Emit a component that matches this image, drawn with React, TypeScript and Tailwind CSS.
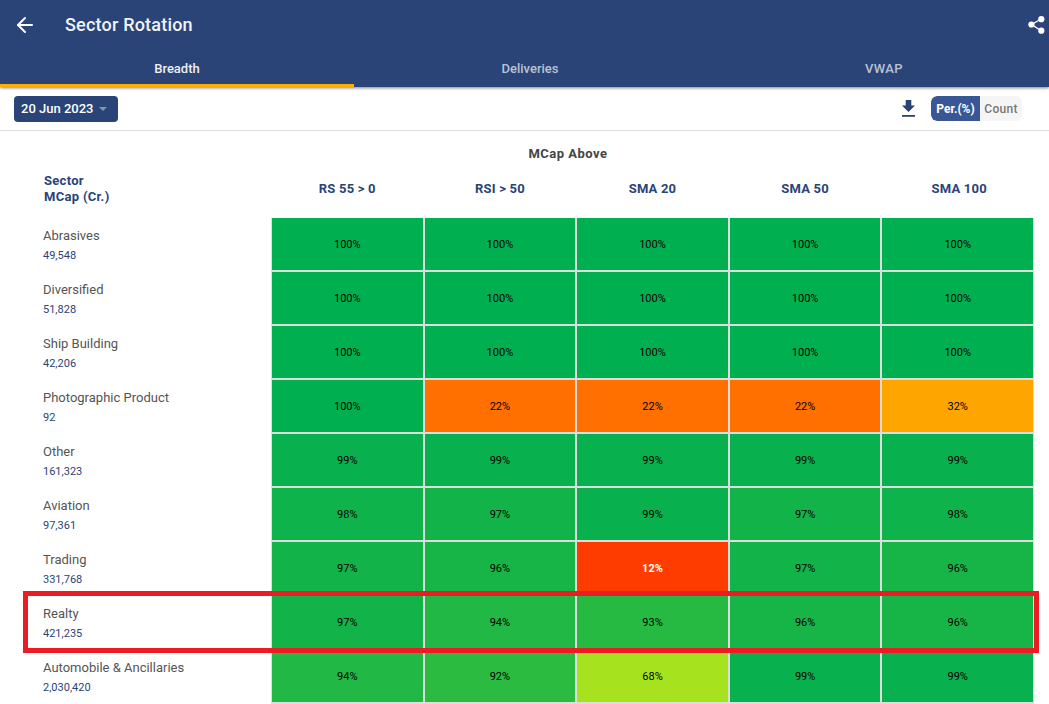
import { ArrowLeft } from "lucide-react";

const columns = ["RS 55 > 0", "RSI > 50", "SMA 20", "SMA 50", "SMA 100"];

const colors: Record<number, string> = {
  100: "bg-[#00b050]",
  99: "bg-[#08b14d]",
  98: "bg-[#0fb34b]",
  97: "bg-[#12b449]",
  96: "bg-[#17b548]",
  94: "bg-[#21b845]",
  93: "bg-[#27ba42]",
  92: "bg-[#2bbb40]",
  68: "bg-[#a6e31e]",
  32: "bg-[#ffa500]",
  22: "bg-[#ff7000]",
  12: "bg-[#ff3c00]",
};

const rows = [
  { name: "Abrasives", mcap: "49,548", values: [100, 100, 100, 100, 100] },
  { name: "Diversified", mcap: "51,828", values: [100, 100, 100, 100, 100] },
  { name: "Ship Building", mcap: "42,206", values: [100, 100, 100, 100, 100] },
  { name: "Photographic Product", mcap: "92", values: [100, 22, 22, 22, 32] },
  { name: "Other", mcap: "161,323", values: [99, 99, 99, 99, 99] },
  { name: "Aviation", mcap: "97,361", values: [98, 97, 99, 97, 98] },
  { name: "Trading", mcap: "331,768", values: [97, 96, 12, 97, 96] },
  { name: "Realty", mcap: "421,235", values: [97, 94, 93, 96, 96] },
  { name: "Automobile & Ancillaries", mcap: "2,030,420", values: [94, 92, 68, 99, 99] },
];

const App = () => {
  return (
    <div className="relative h-[704px] w-[1049px] overflow-hidden bg-white font-['Roboto','Liberation_Sans',sans-serif]">
      <header className="h-[87px] bg-[#2a4478] shadow-[0_1px_3px_rgba(0,0,0,0.5)]">
        <div className="flex h-[50px] items-center pb-[1px]">
          <ArrowLeft className="ml-[13px] h-6 w-6 shrink-0 text-white" strokeWidth={2} />
          <h1 className="ml-[28px] text-[18px] font-medium tracking-[0.2px] text-[#f1f3f7]">Sector Rotation</h1>
          <svg viewBox="0 0 17 18" className="ml-auto mr-[4px] h-[18px] w-[17px] fill-white stroke-white">
            <path d="M13 3 3.7 8.5 13 14.7" fill="none" strokeWidth="1.3" />
            <circle cx="13.3" cy="3.2" r="3.1" stroke="none" />
            <circle cx="3.4" cy="8.5" r="3.1" stroke="none" />
            <circle cx="13.3" cy="14.7" r="3.1" stroke="none" />
          </svg>
        </div>
        <div className="flex h-[37px] text-[13px] font-medium">
          <div className="flex w-[354px] shrink-0 items-center justify-center border-b-[3px] border-[#ffab00] pt-[4px] text-[#eceff5]">
            Breadth
          </div>
          <div className="flex w-[352px] shrink-0 items-center justify-center border-b-[3px] border-transparent pt-[4px] text-[#b9c2d4]">
            Deliveries
          </div>
          <div className="flex w-[356px] shrink-0 items-center justify-center border-b-[3px] border-transparent pt-[4px] tracking-[0.4px] text-[#b9c2d4]">
            VWAP
          </div>
        </div>
      </header>

      <div className="flex h-[44px] items-center border-b border-[#dddddd]">
        <button className="ml-[14px] flex h-[26px] w-[104px] items-center rounded-[4px] bg-[#2a4478] pl-[7px] text-[13px] font-medium text-white">
          20 Jun 2023
          <span className="ml-[6px] mt-px h-0 w-0 border-x-4 border-t-4 border-x-transparent border-t-[#8793ad]" />
        </button>
        <svg viewBox="0 0 13 17" className="ml-auto h-[17px] w-[13px] fill-[#2a4478]">
          <path d="M3.7 0h5.6v5.5h3.7L6.5 12 0 5.5h3.7z" />
          <rect x="0" y="15" width="13" height="1.8" />
        </svg>
        <div className="ml-[16px] mr-[27px] flex h-[25px] overflow-hidden rounded-[6px] bg-[#f5f5f5] text-[12px] font-medium">
          <span className="flex w-[49px] items-center justify-center rounded-l-[6px] bg-[#3a5795] font-bold text-white">
            Per.(%)
          </span>
          <span className="flex w-[42px] items-center justify-center tracking-[0.3px] text-[#777777]">Count</span>
        </div>
      </div>

      <p className="mt-[15px] pl-[87px] text-center text-[13px] font-bold leading-[16px] tracking-[0.5px] text-[#444444]">
        MCap Above
      </p>

      <div className="flex h-[56px] items-start">
        <div className="ml-[44px] mt-[11px] w-[227px] text-[13px] font-bold leading-[16px] tracking-[0.3px] text-[#2a4478]">
          Sector
          <br />
          MCap (Cr.)
        </div>
        <div className="grid w-[763px] grid-cols-5 pt-[19px]">
          {columns.map((c) => (
            <div key={c} className="text-center text-[13px] font-bold leading-[16px] tracking-[0.2px] text-[#2a4478] last:pl-[3px]">
              {c}
            </div>
          ))}
        </div>
      </div>

      <div>
        {rows.map((r) => (
          <div key={r.name} className="flex h-[54px]">
            <div className="w-[271px] pl-[43px] pt-[10px]">
              <div className="text-[13px] leading-[16px] text-[#555555]">{r.name}</div>
              <div className="mt-[5px] text-[11px] leading-[14px] text-[#2a4478]">{r.mcap}</div>
            </div>
            <div className="grid w-[763px] grid-cols-5 gap-x-[2px] border-x border-b-2 border-[#dddddd] bg-[#dddddd]">
              {r.values.map((v, i) => (
                <div
                  key={i}
                  className={`flex items-center justify-center pt-[2px] text-[11px] ${colors[v]} ${
                    v === 12 ? "font-bold text-white" : "text-black"
                  }`}
                >
                  {v}%
                </div>
              ))}
            </div>
          </div>
        ))}
      </div>

      {/* highlight drawn over the Realty row */}
      <div className="absolute left-[23px] top-[591px] h-[62px] w-[1016px] border-[5px] border-[#ed1c24]" />
    </div>
  );
};

export default App;
